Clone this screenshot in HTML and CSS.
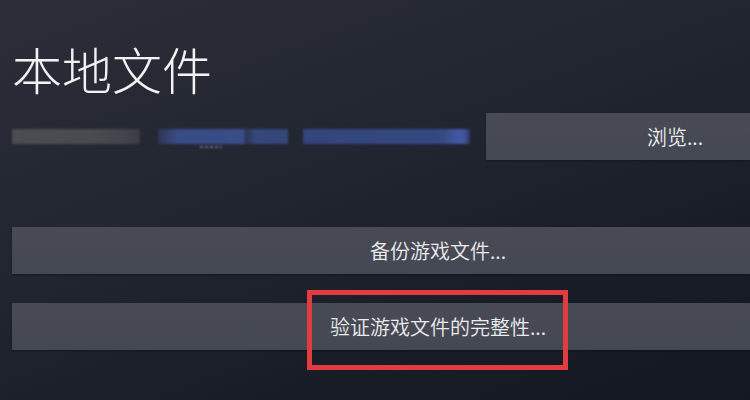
FILE: index.html
```html
<!DOCTYPE html>
<html lang="zh-CN">
<head>
<meta charset="utf-8">
<title>本地文件</title>
<link rel="stylesheet" href="styles.css">
</head>
<body>
<div class="page">
  <h1 class="title">本地文件</h1>
  <div class="path-row">
    <div class="path">
      <div class="blur bar-gray"></div>
      <div class="blur bar-blue1"><span class="dots"></span></div>
      <div class="blur bar-blue2"></div>
    </div>
    <button class="btn btn-browse">浏览...</button>
  </div>
  <div class="actions">
    <button class="btn">备份游戏文件...</button>
    <button class="btn">验证游戏文件的完整性...</button>
  </div>
</div>
<div class="highlight"></div>
</body>
</html>
```

FILE: styles.css
```css
html, body {
  margin: 0;
  padding: 0;
}
body {
  width: 750px;
  height: 400px;
  overflow: hidden;
  position: relative;
  background: linear-gradient(160deg, #2b2e39 0%, #222631 40%, #181c27 75%, #141823 100%);
  font-family: "Noto Sans CJK SC", "Noto Sans", sans-serif;
  color: #e9eaec;
}
.page {
  width: 738px;
  padding: 42px 0 0 12px;
  display: flex;
  flex-direction: column;
}
.title {
  margin: 0;
  font-size: 50px;
  line-height: 52px;
  font-weight: 300;
  color: #f2f2f2;
}
.path-row {
  margin-top: 19px;
  display: flex;
  align-items: center;
  height: 47px;
}
.path {
  width: 474px;
  display: flex;
  align-items: center;
}
.blur {
  height: 15px;
  filter: blur(0.8px);
  position: relative;
}
.bar-gray {
  width: 128px;
  background: linear-gradient(90deg, #4c4d53 0%, #4a4b51 60%, #45464d 85%, #3a3c44 100%);
}
.bar-blue1 {
  margin-left: 18px;
  width: 130px;
  background: linear-gradient(90deg, #2e3650 0%, #3a4c86 15%, #3b4d88 65%, #2d3658 68%, #36477a 75%, #35467a 100%);
}
.dots {
  position: absolute;
  left: 42px;
  top: 17px;
  width: 22px;
  height: 2px;
  background: repeating-linear-gradient(90deg, #6a6f80 0 3px, transparent 3px 5px);
}
.bar-blue2 {
  margin-left: 15px;
  width: 167px;
  background: linear-gradient(90deg, #34457c 0%, #35477f 50%, #344780 80%, #3a4c88 86%, #4256a2 92%, #4256a0 96%, #2e3a60 100%);
}
.btn {
  display: flex;
  align-items: center;
  justify-content: center;
  box-sizing: border-box;
  height: 47px;
  border: 0;
  margin: 0;
  padding: 0 0 0 114px;
  background: linear-gradient(180deg, #484b56 0%, #444853 100%);
  color: #ececee;
  font-family: "Noto Sans CJK SC", "Noto Sans", sans-serif;
  font-size: 20px;
  font-weight: 350;
  box-shadow: 0 1px 2px rgba(0,0,0,0.35);
}
.btn-browse {
  flex: 1;
}
.actions {
  margin-top: 67px;
  display: flex;
  flex-direction: column;
  gap: 29px;
}
.highlight {
  position: absolute;
  left: 307px;
  top: 290px;
  width: 251px;
  height: 70px;
  border: 5px solid #e23b40;
  pointer-events: none;
}
```
